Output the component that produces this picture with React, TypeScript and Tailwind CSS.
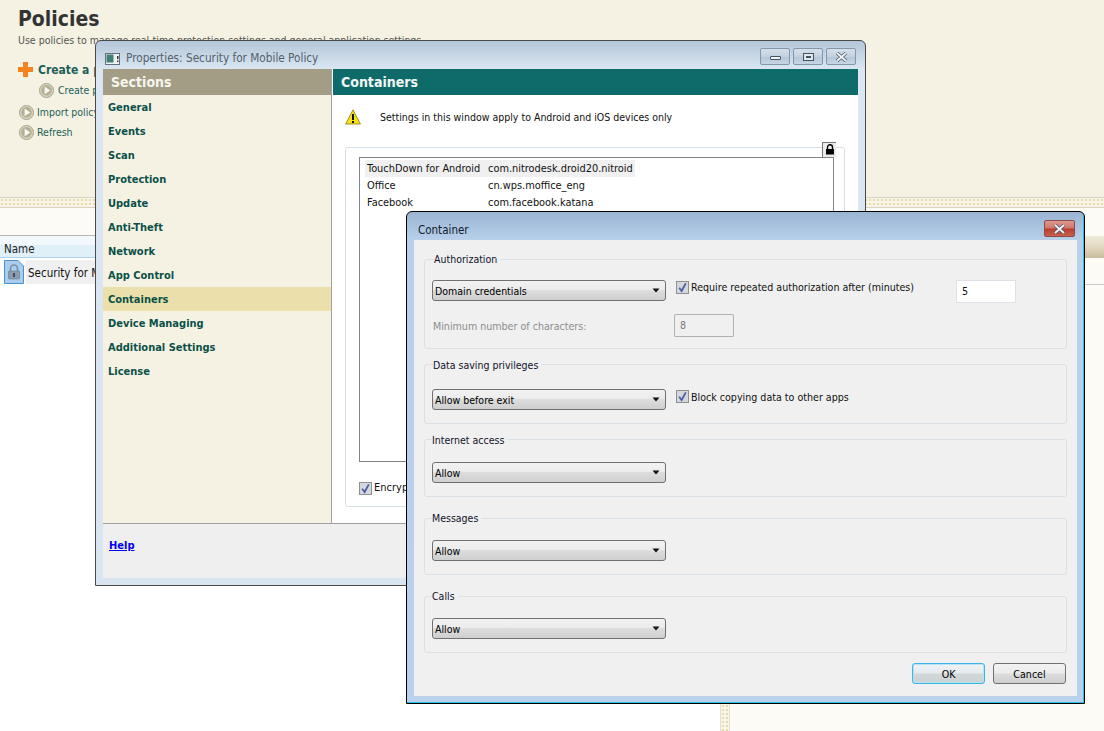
import type { ReactNode } from "react";

const FONT = "font-['DejaVu_Sans_Condensed','Liberation_Sans',sans-serif]";

function Bullet() {
  return (
    <svg width="15" height="15" viewBox="0 0 15 15" className="shrink-0">
      <circle cx="7.5" cy="7.5" r="7" fill="#d9d4bf" stroke="#a8a28c" strokeWidth="1" />
      <circle cx="7.5" cy="7.2" r="5.2" fill="#b5af95" />
      <path d="M5.6 3.6 L11.2 7.4 L5.6 11.2 Z" fill="#fbfaf3" />
    </svg>
  );
}

function Check() {
  return (
    <span className="flex h-[13px] w-[13px] shrink-0 items-center justify-center border border-[#8e8f8f] bg-[#d4d7dc]">
      <svg width="11" height="11" viewBox="0 0 11 11">
        <path d="M2.2 5.8 L4.6 9 L8.8 1.4" fill="none" stroke="#4a5fa5" strokeWidth="1.8" />
      </svg>
    </span>
  );
}

function Combo({ label }: { label: string }) {
  return (
    <div className="flex h-[21px] w-[234px] shrink-0 items-center justify-between rounded-[3px] border border-[#707070] bg-[linear-gradient(to_bottom,#f2f2f2_0%,#ebebeb_48%,#dddddd_50%,#cfcfcf_100%)] pl-[2px] pr-[5px] text-[10.5px] text-black">
      <span className="pt-[3px]">{label}</span>
      <svg width="8" height="5" viewBox="0 0 8 5">
        <path d="M0.5 0.5 H7.5 L4 4.5 Z" fill="#111" />
      </svg>
    </div>
  );
}

function Group({
  title,
  className = "",
  labelClass = "left-[7px] top-[-8px]",
  children,
}: {
  title: string;
  className?: string;
  labelClass?: string;
  children: ReactNode;
}) {
  return (
    <div className={`relative rounded-[3px] border border-[#d9e0e6] ${className}`}>
      <span className={`absolute bg-[#f0f0f0] pr-[3px] text-[10.5px] leading-[14px] text-[#12122a] ${labelClass}`}>
        {title}
      </span>
      {children}
    </div>
  );
}

function CaptionButton({ children, red }: { children: ReactNode; red?: boolean }) {
  return (
    <div
      className={
        red
          ? "flex h-[17px] w-[31px] items-center justify-center rounded-[2px] border border-[#8d4a48] bg-[linear-gradient(to_bottom,#dc9a90_0%,#d0766a_48%,#b83c2c_52%,#c8604c_100%)]"
          : "flex h-[17px] w-[30px] items-center justify-center rounded-[2px] border border-[#8496ab] bg-[linear-gradient(to_bottom,#d6e0ea_0%,#c3d1e0_50%,#b4c5d8_52%,#c7d6e5_100%)]"
      }
    >
      {children}
    </div>
  );
}

const CloseGlyph = () => (
  <svg width="13" height="10" viewBox="0 0 13 10">
    <path d="M2 1 L11 9 M11 1 L2 9" fill="none" stroke="#4a5668" strokeWidth="3.4" />
    <path d="M2 1 L11 9 M11 1 L2 9" fill="none" stroke="#f2f5f8" strokeWidth="1.8" />
  </svg>
);

const SECTIONS = [
  "General",
  "Events",
  "Scan",
  "Protection",
  "Update",
  "Anti-Theft",
  "Network",
  "App Control",
  "Containers",
  "Device Managing",
  "Additional Settings",
  "License",
];

const APPS = [
  ["TouchDown for Android", "com.nitrodesk.droid20.nitroid"],
  ["Office", "cn.wps.moffice_eng"],
  ["Facebook", "com.facebook.katana"],
];

function PropertiesWindow() {
  return (
    <div className="absolute left-[95px] top-[40px] flex h-[546px] w-[771px] flex-col rounded-t-[6px] border border-[#4a4a4a] bg-[linear-gradient(to_bottom,#b4c6d9_0px,#dae6f2_28px,#d9e6f2_100%)] px-[7px] pb-[7px]">
      <div className="flex h-[28px] shrink-0 items-center pt-[7px]">
        <svg width="15" height="12" viewBox="0 0 15 12" className="ml-[2px] mr-[6px]">
          <rect x="0.5" y="0.5" width="14" height="11" fill="#eef2f0" stroke="#66707a" />
          <rect x="1.5" y="1.5" width="7" height="8" fill="#3f7f78" />
          <rect x="12" y="3" width="1.5" height="3" fill="#333" />
          <rect x="12" y="7.5" width="1.5" height="1.5" fill="#333" />
        </svg>
        <span className="pt-[1px] text-[11.7px] text-[#55606a]">Properties: Security for Mobile Policy</span>
        <div className="ml-auto mr-[2px] mt-[-4px] flex gap-[3px]">
          <CaptionButton>
            <span className="mt-[3px] h-[4px] w-[11px] rounded-[1px] border border-[#46525f] bg-[#f2f5f8]" />
          </CaptionButton>
          <CaptionButton>
            <span className="flex h-[8px] w-[11px] items-center justify-center border border-[#46525f] bg-[#dfe7ef]">
              <span className="h-[2px] w-[5px] border border-[#46525f]" />
            </span>
          </CaptionButton>
          <CaptionButton>
            <CloseGlyph />
          </CaptionButton>
        </div>
      </div>

      <div className="flex min-h-0 flex-1 bg-white">
        <aside className="flex w-[229px] shrink-0 flex-col border-r border-[#a3a3a0] bg-[#f5f2e3]">
          <div className="flex h-[26px] shrink-0 items-center bg-[#a39d85] pl-[8px] pt-[1px] text-[14px] font-bold text-[#f7f6ee]">
            Sections
          </div>
          <nav>
            {SECTIONS.map((s) => (
              <div
                key={s}
                className={`flex h-[24px] items-center pl-[5px] pt-[2px] text-[11px] font-bold text-[#0b5048] ${
                  s === "Containers" ? "bg-[#ebe0ab]" : ""
                }`}
              >
                {s}
              </div>
            ))}
          </nav>
        </aside>
        <main className="relative min-w-0 flex-1 pl-[1px]">
          <div className="flex h-[26px] items-center bg-[#0f6b6a] pl-[8px] pt-[1px] text-[14px] font-bold text-[#f2f7f6]">
            Containers
          </div>
          <div className="flex items-center pl-[12px] pt-[14px]">
            <svg width="16" height="16" viewBox="0 0 16 16">
              <path d="M8 0.8 L15.4 15 H0.6 Z" fill="#f7e017" stroke="#8a7a10" strokeWidth="0.8" strokeLinejoin="round" />
              <rect x="7" y="5" width="2" height="6" fill="#111" />
              <rect x="7" y="12" width="2" height="2" fill="#111" />
            </svg>
            <span className="ml-[19px] mt-[1px] text-[10.5px] text-[#111]">
              Settings in this window apply to Android and iOS devices only
            </span>
          </div>
          <div className="relative ml-[12px] mt-[21px] h-[360px] w-[500px] rounded-[3px] border border-[#d5dfe6]">
            <div className="absolute right-[8px] top-[-6px] flex h-[15px] w-[14px] items-center justify-center border-l border-t border-[#777] bg-[#ececec]">
              <svg width="10" height="11" viewBox="0 0 10 11">
                <path d="M2.5 5 V3.2 a2.5 2.5 0 0 1 5 0 V5" fill="none" stroke="#000" strokeWidth="1.4" />
                <rect x="1" y="5" width="8" height="5.5" fill="#000" />
              </svg>
            </div>
            <div className="ml-[13px] mt-[9px] h-[305px] w-[475px] border border-[#82828a] bg-white pl-[5px] pt-[2px] text-[10.9px] text-[#111]">
              {APPS.map(([name, pkg], i) => (
                <div key={name} className={`flex h-[17px] w-[270px] items-center pt-[1px] ${i === 0 ? "bg-[#f0f0f0]" : ""}`}>
                  <span className="w-[123px] pl-[2px]">{name}</span>
                  <span>{pkg}</span>
                </div>
              ))}
            </div>
            <div className="ml-[13px] mt-[18px] flex items-center gap-[2px] text-[11px] text-[#111]">
              <Check />
              <span>Encrypt</span>
            </div>
          </div>
        </main>
      </div>

      <div className="flex h-[55px] shrink-0 border-t border-[#a0a0a0] bg-[#efefef] pl-[6px] pt-[15px]">
        <a className="text-[11px] font-bold leading-[14px] text-[#0000f0] underline">Help</a>
      </div>
    </div>
  );
}

function ContainerDialog() {
  return (
    <div className="absolute left-[406px] top-[211px] flex h-[493px] w-[679px] flex-col rounded-t-[6px] border border-black bg-[linear-gradient(to_bottom,#9ab4d2_0px,#b8d0ea_28px,#b9d1ea_100%)] px-[7px] pb-[7px] shadow-[inset_-1px_-1px_0_#27c0e8]">
      <div className="flex h-[28px] shrink-0 items-center justify-between pt-[7px]">
        <span className="ml-[4px] pt-[2px] text-[11.5px] text-[#111c2c]">Container</span>
        <div className="mr-[2px] mt-[-2px]">
          <CaptionButton red>
            <CloseGlyph />
          </CaptionButton>
        </div>
      </div>
      <div className="flex min-h-0 flex-1 flex-col bg-[#f0f0f0] pl-[10px] pr-[10px] pt-[19px] text-[10.6px] text-[#111]">
        <Group title="Authorization" labelClass="left-[9px] top-[-8px]" className="h-[90px] shrink-0">
          <div className="flex pl-[7px] pt-[20px]">
            <Combo label="Domain credentials" />
            <div className="ml-[10px] mt-[1px] flex h-[13px] items-center gap-[2px]">
              <Check />
              <span className="pt-[1px]">Require repeated authorization after (minutes)</span>
            </div>
            <div className="absolute left-[531px] top-[20px] flex h-[23px] w-[60px] items-center border border-[#dde2e8] bg-white pl-[5px]">5</div>
          </div>
          <div className="flex items-center pl-[8px] pt-[13px] text-[#8d8d8d]">
            <span className="w-[241px] pt-[3px]">Minimum number of characters:</span>
            <div className="flex h-[23px] w-[60px] items-center rounded-[1px] border border-[#adb2b5] pl-[5px] text-[#7a7a7a]">8</div>
          </div>
        </Group>
        <Group title="Data saving privileges" labelClass="left-[8px] top-[-7px]" className="mt-[15px] h-[60px] shrink-0">
          <div className="flex pl-[7px] pt-[24px]">
            <Combo label="Allow before exit" />
            <div className="ml-[10px] mt-[1px] flex h-[13px] items-center gap-[2px]">
              <Check />
              <span className="pt-[2px]">Block copying data to other apps</span>
            </div>
          </div>
        </Group>
        <Group title="Internet access" labelClass="left-[7px] top-[-7px]" className="mt-[15px] h-[58px] shrink-0">
          <div className="pl-[7px] pt-[22px]">
            <Combo label="Allow" />
          </div>
        </Group>
        <Group title="Messages" className="mt-[21px] h-[57px] shrink-0">
          <div className="pl-[7px] pt-[21px]">
            <Combo label="Allow" />
          </div>
        </Group>
        <Group title="Calls" className="mt-[21px] h-[57px] shrink-0">
          <div className="pl-[7px] pt-[21px]">
            <Combo label="Allow" />
          </div>
        </Group>
        <div className="mt-[10px] flex justify-end gap-[8px] pr-[1px]">
          <button className="h-[21px] w-[73px] rounded-[3px] border border-[#3bb5e8] bg-[linear-gradient(to_bottom,#eef3f6_0%,#e4eaee_48%,#d2d8da_52%,#ccd2d4_100%)] pt-[3px] text-[10.6px] text-black shadow-[inset_0_0_0_1px_#b5e4f7]">
            OK
          </button>
          <button className="h-[21px] w-[73px] rounded-[3px] border border-[#707070] bg-[linear-gradient(to_bottom,#f2f2f2_0%,#ebebeb_48%,#dddddd_52%,#cfcfcf_100%)] pt-[3px] text-[10.6px] text-black">
            Cancel
          </button>
        </div>
      </div>
    </div>
  );
}

export default function App() {
  return (
    <div className={`relative flex h-[731px] w-[1104px] flex-col overflow-hidden bg-white ${FONT}`}>
      <header className="h-[197px] shrink-0 bg-[#f5f2e3] pl-[18px] pt-[6px] text-[#1d5f58]">
        <h1 className="text-[21px] font-bold leading-[26px] text-[#333]">Policies</h1>
        <p className="mt-[1px] text-[10.5px] leading-[14px] text-[#555]">
          Use policies to manage real-time protection settings and general application settings.
        </p>
        <div className="mt-[15px] flex h-[15px] items-center gap-[5px]">
          <svg width="15" height="15" viewBox="0 0 15 15">
            <path d="M5 0 H10 V5 H15 V10 H10 V15 H5 V10 H0 V5 H5 Z" fill="#f58220" />
          </svg>
          <span className="text-[12px] font-bold">Create a policy</span>
        </div>
        <div className="ml-[21px] mt-[6px] flex h-[15px] items-center gap-[4px] text-[10.5px]">
          <Bullet />
          <span>Create policy</span>
        </div>
        <div className="ml-[1px] mt-[7px] flex h-[15px] items-center gap-[3px] text-[10.5px]">
          <Bullet />
          <span>Import policy</span>
        </div>
        <div className="ml-[1px] mt-[5px] flex h-[15px] items-center gap-[3px] text-[10.5px]">
          <Bullet />
          <span>Refresh</span>
        </div>
      </header>
      <div className="h-[11px] shrink-0 border-y border-[#d8d4c4] bg-[#f8f5e8] bg-[radial-gradient(circle,#e6dca8_1.2px,transparent_1.3px)] bg-[length:4px_4px]" />

      <div className="flex min-h-0 flex-1">
        <div className="w-[720px] shrink-0">
          <div className="h-[28px] border-b border-[#b8b6ae] bg-[#fcfbf6]" />
          <div className="flex h-[22px] items-center border-b border-[#a9d3ea] bg-[linear-gradient(to_bottom,#f2f8fc_0%,#f2f8fc_40%,#dff0f9_45%,#dff0f9_100%)] pl-[4px] pt-[6px] text-[11.5px] text-[#222]">
            Name
          </div>
          <div className="flex h-[25px] items-center pl-[4px] pt-[2px]">
            <svg width="20" height="24" viewBox="0 0 20 24">
              <path d="M0.5 0.5 H14 L19.5 6 V23.5 H0.5 Z" fill="#a9cdee" stroke="#4f8fcb" />
              <path d="M6.5 11 V8.5 a3.5 3.5 0 0 1 7 0 V11" fill="none" stroke="#7b8ea3" strokeWidth="1.6" />
              <rect x="4.5" y="11" width="11" height="8" rx="1" fill="#8b9cae" stroke="#66788c" strokeWidth="0.6" />
              <rect x="9.2" y="13" width="1.6" height="4" fill="#2c3846" />
            </svg>
            <span className="ml-[2px] bg-[#f0f0f0] pl-[2px] pr-[40px] pt-[3px] text-[11.5px] leading-[21px] text-[#111]">
              Security for Mobile Policy
            </span>
          </div>
        </div>
        <div className="w-[10px] shrink-0 border-x border-[#e4e0d0] bg-[#f8f5e8] bg-[radial-gradient(circle,#e6dca8_1.2px,transparent_1.3px)] bg-[length:4px_4px]" />
        <div className="min-w-0 flex-1 bg-[#fcfbf6]">
          <div className="h-[28px]" />
          <div className="h-[22px] bg-[linear-gradient(to_bottom,#f0eadb_0%,#e2d9c2_50%,#c9bc9c_100%)]" />
          <div className="h-[27px] border-b border-[#ccc]" />
        </div>
      </div>

      <PropertiesWindow />
      <ContainerDialog />
    </div>
  );
}
